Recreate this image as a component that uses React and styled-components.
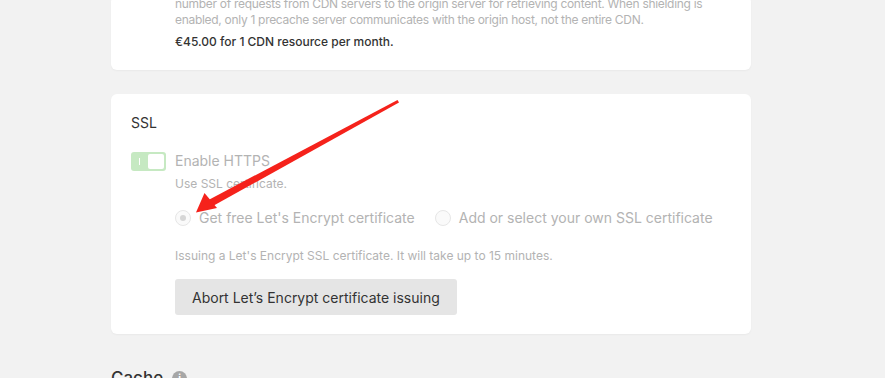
import styled, { createGlobalStyle } from 'styled-components';

const GlobalStyle = createGlobalStyle`
  html, body {
    margin: 0;
    padding: 0;
    background: #f2f2f2;
    font-family: Inter, "Noto Sans", sans-serif;
    overflow: hidden;
  }
`;

const Page = styled.div`
  position: relative;
  width: 885px;
  height: 378px;
  overflow: hidden;
`;

const Column = styled.div`
  width: 640px;
  margin: -4px 0 0 111px;
  display: flex;
  flex-direction: column;
  gap: 24px;
`;

const Card = styled.div`
  background: #fff;
  border-radius: 6px;
  box-shadow: 0 1px 2px rgba(0, 0, 0, 0.04);
  padding: ${p => p.$pad || '20px'};
`;

const Muted = styled.p`
  margin: 0;
  color: #b3b3b3;
  font-size: ${p => p.$size || 12}px;
  line-height: ${p => p.$lh || 16}px;
  letter-spacing: ${p => p.$ls || 0};
`;

const Price = styled.p`
  margin: 6px 0 0;
  color: #333;
  font-size: 12px;
  font-weight: 500;
  line-height: 16px;
`;

const Title = styled.h3`
  margin: 0 0 20px;
  font-size: 14px;
  font-weight: 400;
  color: #333;
  line-height: 18px;
`;

const ToggleRow = styled.div`
  display: flex;
  align-items: flex-start;
  gap: 9px;
`;

const Toggle = styled.div`
  width: 35px;
  height: 19px;
  box-sizing: border-box;
  background: #c6e9c2;
  border-radius: 3px;
  padding: 2px;
  display: flex;
  align-items: stretch;
  justify-content: space-between;
`;

const ToggleMark = styled.span`
  width: 1px;
  margin: 4px 0 4px 6px;
  background: #fff;
`;

const Knob = styled.span`
  width: 16px;
  background: #fff;
  border-radius: 2px;
`;

const ToggleText = styled.div`
  display: flex;
  flex-direction: column;
  gap: 8px;
`;

const Label = styled.span`
  font-size: 14px;
  color: #b3b3b3;
  line-height: 17px;
`;

const Options = styled.div`
  margin-top: 18px;
  padding-left: 44px;
  display: flex;
  gap: 20px;
`;

const Radio = styled.label`
  display: flex;
  align-items: center;
  gap: 8px;
  font-size: 14px;
  color: #b3b3b3;
`;

const Dot = styled.span`
  width: 16px;
  height: 16px;
  box-sizing: border-box;
  border-radius: 50%;
  border: 1px solid #e6e6e6;
  background: #fafafa;
  display: flex;
  align-items: center;
  justify-content: center;
  &::after {
    content: '';
    width: 6px;
    height: 6px;
    border-radius: 50%;
    background: ${p => (p.$on ? '#d6d6d6' : 'transparent')};
  }
`;

const Note = styled(Muted)`
  margin-top: 23px;
  padding-left: 44px;
`;

const Button = styled.button`
  margin: 16px 0 0 44px;
  height: 36px;
  padding: 0 17px;
  border: none;
  border-radius: 3px;
  background: #e5e5e5;
  color: #333;
  font-family: inherit;
  font-size: 14px;
  cursor: pointer;
`;

const Section = styled.h2`
  margin: 10px 0 0;
  display: flex;
  align-items: center;
  gap: 9px;
  font-size: 17px;
  font-weight: 500;
  color: #333;
`;

const Info = styled.span`
  width: 15px;
  height: 15px;
  border-radius: 50%;
  background: #a6a6a6;
  color: #fff;
  font-size: 10px;
  font-weight: 700;
  display: inline-flex;
  align-items: center;
  justify-content: center;
`;

const Arrow = styled.svg`
  position: absolute;
  left: 0;
  top: 0;
  pointer-events: none;
`;

export default function App() {
  return (
    <Page>
      <GlobalStyle />
      <Column>
        <Card $pad="0 16px 20px 64px">
          <Muted $ls="-0.3px">
            number of requests from CDN servers to the origin server for retrieving content. When shielding is
            enabled, only 1 precache server communicates with the origin host, not the entire CDN.
          </Muted>
          <Price>€45.00 for 1 CDN resource per month.</Price>
        </Card>
        <Card $pad="20px 20px 19px">
          <Title>SSL</Title>
          <ToggleRow>
            <Toggle>
              <ToggleMark />
              <Knob />
            </Toggle>
            <ToggleText>
              <Label>Enable HTTPS</Label>
              <Muted $lh={14}>Use SSL certificate.</Muted>
            </ToggleText>
          </ToggleRow>
          <Options>
            <Radio>
              <Dot $on />
              Get free Let's Encrypt certificate
            </Radio>
            <Radio>
              <Dot />
              Add or select your own SSL certificate
            </Radio>
          </Options>
          <Note $lh={14}>Issuing a Let's Encrypt SSL certificate. It will take up to 15 minutes.</Note>
          <Button>Abort Let’s Encrypt certificate issuing</Button>
        </Card>
        <Section>
          Cache <Info>i</Info>
        </Section>
      </Column>
      <Arrow width="885" height="378" viewBox="0 0 885 378">
        <polygon points="397.5,100 399,102.5 212,206.5 208.5,200" fill="#f5221b" />
        <polygon points="196,212.5 204.5,193 217,208" fill="#f5221b" />
      </Arrow>
    </Page>
  );
}
